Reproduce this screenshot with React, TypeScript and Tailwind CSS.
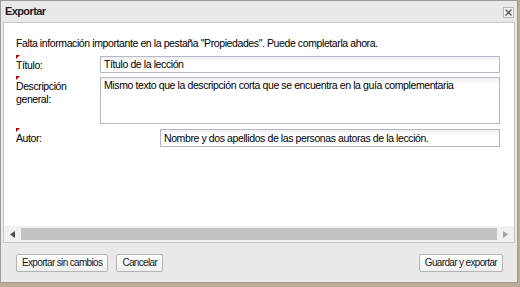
import React from "react";

const font = { fontFamily: '"Liberation Sans", Arial, sans-serif' };

function Marker() {
  return (
    <span className="absolute left-0 top-[-1px] w-0 h-0 border-t-[4px] border-t-[#c00000] border-r-[4px] border-r-transparent" />
  );
}

const btn =
  "h-[18px] px-[5px] border border-[#b4b4b4] rounded-[2px] bg-gradient-to-b from-white to-[#efefef] text-[10px] tracking-[-0.65px] leading-none text-[#222]";

export default function App() {
  return (
    <div
      className="w-[520px] h-[287px] bg-[#b9ad98] relative overflow-hidden text-[10.5px] tracking-[-0.4px] text-black"
      style={font}
    >
      <div className="w-[518px] h-[283px] border border-[#9a9a9a] bg-[#e9e9e9] flex flex-col">
        {/* title bar */}
        <div className="h-[21px] flex items-center justify-between pl-[4px] pr-[3px] shrink-0">
          <span className="font-bold text-[#222] text-[11px] tracking-[-0.6px] leading-none">Exportar</span>
          <div className="w-[11px] h-[11px] border border-[#b8b8b8] bg-[#f4f4f4] flex items-center justify-center mt-[2px]">
            <svg width="7" height="7" viewBox="0 0 7 7">
              <path d="M0.5 0.5 L6.5 6.5 M6.5 0.5 L0.5 6.5" stroke="#555" strokeWidth="1.3" />
            </svg>
          </div>
        </div>
        {/* content panel */}
        <div className="mx-[2px] h-[221px] border border-[#c6c6c6] bg-white flex flex-col shrink-0">
          <div className="flex-1 pl-[12px] pr-[14px] pt-[14px]">
            <div className="h-[13px] leading-[13px]">
              Falta información importante en la pestaña "Propiedades". Puede completarla ahora.
            </div>
            <div className="mt-[6px] flex items-start">
              <div className="relative w-[84px] pt-[2px] leading-[13px]">
                <Marker />
                <span className="block pt-[1px]">Título:</span>
              </div>
              <div className="flex-1 h-[17px] border border-[#b5b8c8] bg-gradient-to-b from-[#efefef] to-white to-[40%] px-[3px] leading-[15px]">
                Título de la lección
              </div>
            </div>
            <div className="mt-[4px] flex items-start">
              <div className="relative w-[84px] pt-[2px] leading-[13px]">
                <Marker />
                <span className="block pt-[1px]">
                  Descripción
                  <br />
                  general:
                </span>
              </div>
              <div className="flex-1 h-[47px] border border-[#b5b8c8] bg-gradient-to-b from-[#efefef] to-white to-[15%] px-[3px] pt-[1px] leading-[13px]">
                Mismo texto que la descripción corta que se encuentra en la guía complementaria
              </div>
            </div>
            <div className="mt-[5px] flex items-start">
              <div className="relative w-[144px] pt-[2px] leading-[13px]">
                <Marker />
                <span className="block pt-[1px]">Autor:</span>
              </div>
              <div className="flex-1 h-[18px] border border-[#b5b8c8] bg-gradient-to-b from-[#efefef] to-white to-[40%] px-[3px] leading-[16px]">
                Nombre y dos apellidos de las personas autoras de la lección.
              </div>
            </div>
          </div>
          {/* horizontal scrollbar */}
          <div className="h-[16px] bg-[#f1f1f1] flex items-center shrink-0">
            <div className="w-[17px] flex items-center justify-center">
              <svg width="5" height="7" viewBox="0 0 5 7">
                <path d="M5 0 L0 3.5 L5 7 Z" fill="#505050" />
              </svg>
            </div>
            <div className="flex-1 h-[12px] bg-[#c1c1c1]" />
            <div className="w-[17px] flex items-center justify-center">
              <svg width="5" height="7" viewBox="0 0 5 7">
                <path d="M0 0 L5 3.5 L0 7 Z" fill="#a3a3a3" />
              </svg>
            </div>
          </div>
        </div>
        {/* footer */}
        <div className="flex-1 flex items-center justify-between pl-[15px] pr-[14px] pt-[1px]">
          <div className="flex gap-[8px]">
            <button className={btn}>Exportar sin cambios</button>
            <button className={btn}>Cancelar</button>
          </div>
          <button className={btn}>Guardar y exportar</button>
        </div>
      </div>
    </div>
  );
}
